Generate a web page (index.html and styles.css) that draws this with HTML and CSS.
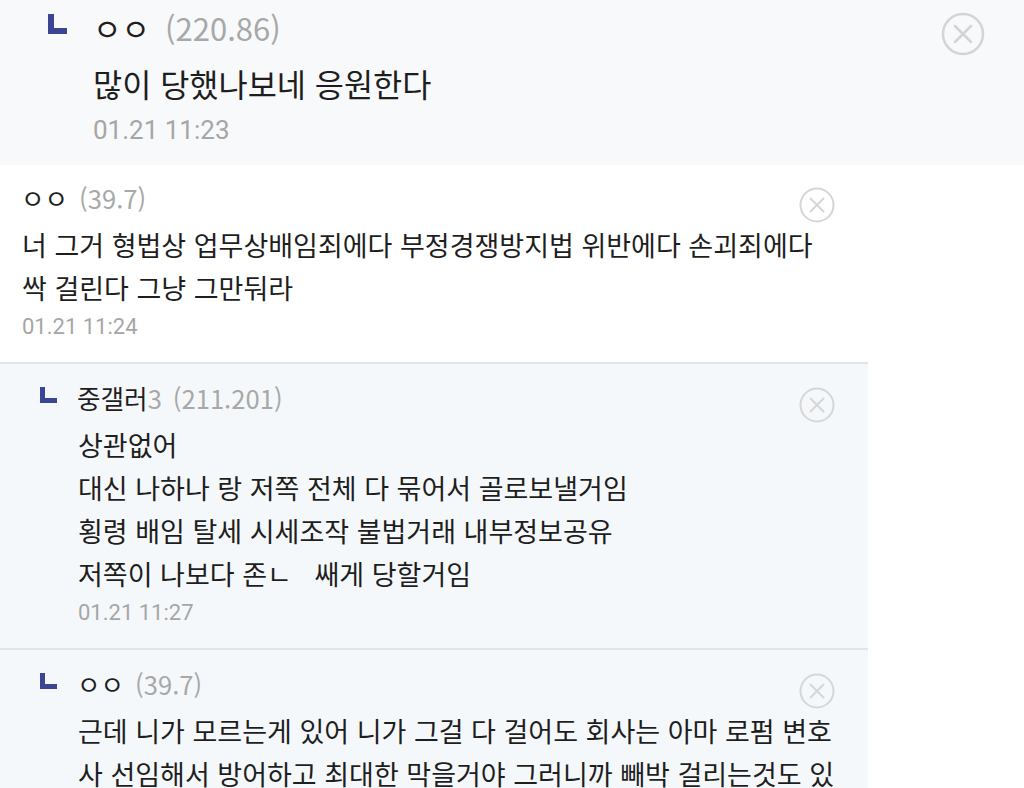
FILE: index.html
```html
<!DOCTYPE html>
<html lang="ko">
<head>
  <meta charset="UTF-8">
  <title>댓글</title>
  <link rel="stylesheet" href="styles.css">
</head>
<body>

<!-- === 위쪽 캡처: 답글 하나 === -->
<section class="top">
  <div class="mark-col"><span class="mark"></span></div>
  <div class="content">
    <div class="head">
      <span class="name">ㅇㅇ</span>
      <span class="ip">(220.86)</span>
      <button class="del" title="삭제">
        <svg width="44" height="44" viewBox="0 0 44 44"><circle cx="22" cy="22" r="20" fill="none" stroke="#d4d4d4" stroke-width="2.5"/><path d="M14 14 L30 30 M30 14 L14 30" stroke="#d4d4d4" stroke-width="2.5" stroke-linecap="round"/></svg>
      </button>
    </div>
    <p class="text">많이 당했나보네 응원한다</p>
    <div class="date">01.21 11:23</div>
  </div>
</section>

<!-- === 아래쪽 캡처: 댓글 + 답글 === -->
<div class="thread">

  <div class="cmt">
    <div class="content">
      <div class="head">
        <span class="name">ㅇㅇ</span>
        <span class="ip">(39.7)</span>
        <button class="del" title="삭제">
          <svg width="36" height="36" viewBox="0 0 36 36"><circle cx="18" cy="18" r="16.5" fill="none" stroke="#d6d6d6" stroke-width="2"/><path d="M11.5 11.5 L24.5 24.5 M24.5 11.5 L11.5 24.5" stroke="#d6d6d6" stroke-width="2" stroke-linecap="round"/></svg>
        </button>
      </div>
      <p class="text">너 그거 형법상 업무상배임죄에다 부정경쟁방지법 위반에다 손괴죄에다 싹 걸린다 그냥 그만둬라</p>
      <div class="date">01.21 11:24</div>
    </div>
  </div>

  <div class="cmt reply">
    <div class="mark-col"><span class="mark"></span></div>
    <div class="content">
      <div class="head">
        <span class="name">중갤러<span class="nick-no">3</span></span>
        <span class="ip">(211.201)</span>
        <button class="del" title="삭제">
          <svg width="36" height="36" viewBox="0 0 36 36"><circle cx="18" cy="18" r="16.5" fill="none" stroke="#d6d6d6" stroke-width="2"/><path d="M11.5 11.5 L24.5 24.5 M24.5 11.5 L11.5 24.5" stroke="#d6d6d6" stroke-width="2" stroke-linecap="round"/></svg>
        </button>
      </div>
      <p class="text">상관없어<br>대신 나하나 랑 저쪽 전체 다 묶어서 골로보낼거임<br>횡령 배임 탈세 시세조작 불법거래 내부정보공유<br>저쪽이 나보다 존ㄴ&nbsp;&nbsp; 쌔게 당할거임</p>
      <div class="date">01.21 11:27</div>
    </div>
  </div>

  <div class="cmt reply">
    <div class="mark-col"><span class="mark"></span></div>
    <div class="content">
      <div class="head">
        <span class="name">ㅇㅇ</span>
        <span class="ip">(39.7)</span>
        <button class="del" title="삭제">
          <svg width="36" height="36" viewBox="0 0 36 36"><circle cx="18" cy="18" r="16.5" fill="none" stroke="#d6d6d6" stroke-width="2"/><path d="M11.5 11.5 L24.5 24.5 M24.5 11.5 L11.5 24.5" stroke="#d6d6d6" stroke-width="2" stroke-linecap="round"/></svg>
        </button>
      </div>
      <p class="text">근데 니가 모르는게 있어 니가 그걸 다 걸어도 회사는 아마 로펌 변호사 선임해서 방어하고 최대한 막을거야 그러니까 빼박 걸리는것도 있어</p>
    </div>
  </div>

</div>

</body>
</html>
```

FILE: styles.css
```css
/* ===== 기본 ===== */
* {
  margin: 0;
  padding: 0;
  box-sizing: border-box;
}
html, body {
  height: 100%;
  overflow: hidden;
}
body {
  font-family: "Noto Sans CJK KR", "Noto Sans", sans-serif;
  background: #fff;
  color: #1e1e1e;
}
button {
  background: none;
  border: none;
  cursor: pointer;
}
.del svg {
  display: block;
}

/* ===== 공통 댓글 ===== */
.content {
  flex: 1;
  min-width: 0;
}
.head {
  display: flex;
  align-items: center;
  height: 40px;
}
.name {
  white-space: nowrap;
}
.ip,
.nick-no {
  color: #a8a8a8;
}
.del {
  margin-left: auto;
  align-self: flex-start;
}
.text {
  word-break: break-all;
}
.date {
  font-family: Roboto, "Noto Sans CJK KR", sans-serif;
  color: #a6a6a6;
}
.mark {
  display: block;
  border-left: 5px solid #3b4594;
  border-bottom: 5px solid #3b4594;
}

/* ===== 위쪽 캡처 ===== */
.top {
  display: flex;
  background: #f8f9fb;
  height: 165px;
  padding: 7px 39px 0 48px;
}
.top .mark-col {
  width: 19px;
  margin-right: 26px;
}
.top .mark {
  width: 19px;
  height: 20px;
  margin-top: 7px;
  border-width: 6px;
}
.top .name {
  font-size: 31px;
}
.top .ip {
  font-size: 31px;
  margin-left: 15px;
}
.top .del {
  margin-top: 5px;
}
.top .text {
  font-size: 31.7px;
  line-height: 48px;
  margin-top: 12px;
}
.top .date {
  font-size: 26px;
  line-height: 40px;
  margin-top: 3px;
}

/* ===== 아래쪽 캡처 ===== */
.thread {
  width: 868px;
}
.cmt {
  display: flex;
  padding: 12px 28px 17px 22px;
  border-bottom: 2px solid #e2e5ea;
}
.reply {
  background: #f5f8fa;
  padding: 13px 28px 17px 40px;
}
.reply .mark-col {
  width: 17px;
  margin-right: 21px;
}
.reply .mark {
  width: 17px;
  height: 16px;
  margin-top: 10px;
}
.cmt .name {
  font-size: 25.6px;
  margin-left: -1px;
}
.cmt .ip {
  font-size: 25.6px;
  margin-left: 11px;
}
.cmt .del {
  margin-top: 10px;
  margin-right: 5px;
}
.cmt .text {
  font-size: 27px;
  line-height: 43px;
  margin-top: 6px;
}
.cmt .date {
  font-size: 22px;
  line-height: 36px;
}
```
